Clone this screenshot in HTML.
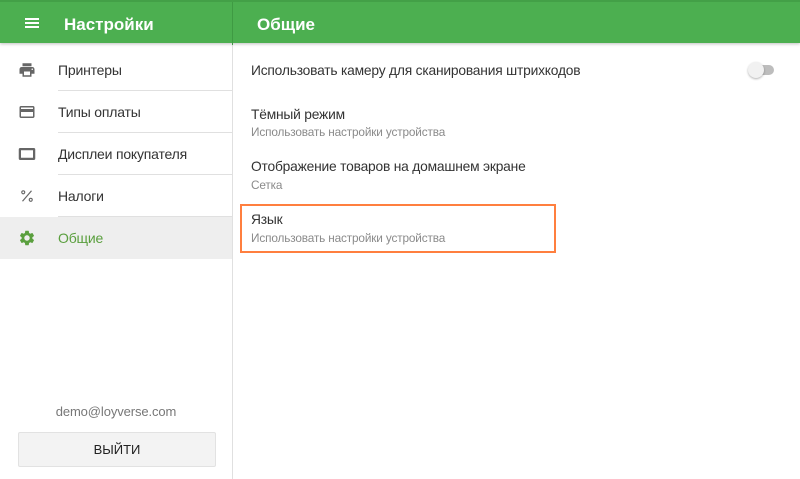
<!DOCTYPE html>
<html><head><meta charset="utf-8"><style>
*{margin:0;padding:0;box-sizing:border-box}
body{width:800px;height:479px;overflow:hidden;background:#fff;font-family:"Liberation Sans",sans-serif;position:relative}
.hdr{position:absolute;left:0;top:0;width:800px;height:43px;background:#4caf50;border-top:2px solid #43a047;box-shadow:0 1px 3px rgba(0,0,0,.25);z-index:2}
.hdr .t{position:absolute;top:13px;color:#fff;font-size:17px;font-weight:bold}
.hdr .sep{position:absolute;left:232px;top:0;width:1px;height:43px;background:#3f9a43}
.side{position:absolute;left:0;top:43px;width:233px;height:436px;border-right:1px solid #e0e0e0}
.row{position:absolute;left:0;width:232px;height:42px}
.row .l{position:absolute;left:58px;top:13px;font-size:14px;color:#333;letter-spacing:-0.2px}
.row .ln{position:absolute;left:58px;right:0;bottom:0;height:1px;background:#e0e0e0}
.row svg{position:absolute;left:18px;top:12px}
.it{position:absolute;left:251px;font-size:13.8px;color:#333;letter-spacing:-0.2px}
.sub{position:absolute;left:251px;font-size:11.8px;color:#8a8a8a;letter-spacing:-0.15px}
</style></head><body>
<div class="hdr">
<svg style="position:absolute;left:25px;top:15px" width="14" height="12" viewBox="0 0 14 12"><rect y="1" width="14" height="2" fill="#fff"/><rect y="5" width="14" height="2" fill="#fff"/><rect y="9" width="14" height="2" fill="#fff"/></svg>
<div class="t" style="left:64px">Настройки</div>
<div class="sep"></div>
<div class="t" style="left:257px">Общие</div>
</div>
<div class="side">
<div class="row" style="top:6px"><svg width="18" height="18" viewBox="0 0 24 24"><path fill="#666" d="M19 8H5c-1.66 0-3 1.340-3 3v6h4v4h12v-4h4v-6c0-1.66-1.34-3-3-3zm-3 11H8v-5h8v5zm3-7c-.55 0-1-.45-1-1s.45-1 1-1 1 .45 1 1-.45 1-1 1zm-1-9H6v4h12V3z"/></svg><div class="l">Принтеры</div><div class="ln"></div></div>
<div class="row" style="top:48px"><svg width="18" height="18" viewBox="0 0 24 24"><path fill="#666" d="M20 4H4c-1.11 0-2 .89-2 2v12c0 1.11.89 2 2 2h16c1.11 0 2-.89 2-2V6c0-1.11-.89-2-2-2zm0 14H4v-6h16v6zm0-10H4V6h16v2z"/></svg><div class="l">Типы оплаты</div><div class="ln"></div></div>
<div class="row" style="top:90px"><svg width="18" height="18" viewBox="0 0 24 24"><path fill="#666" d="M1 6a2 2 0 012-2h18a2 2 0 012 2v12a2 2 0 01-2 2H3a2 2 0 01-2-2zm3 1v10h16V7z"/></svg><div class="l">Дисплеи покупателя</div><div class="ln"></div></div>
<div class="row" style="top:132px"><svg width="18" height="18" viewBox="0 0 24 24"><circle cx="7" cy="7" r="2" fill="none" stroke="#666" stroke-width="1.5"/><circle cx="17" cy="17" r="2" fill="none" stroke="#666" stroke-width="1.5"/><path d="M18 5L6 19" stroke="#666" stroke-width="1.6"/></svg><div class="l">Налоги</div><div class="ln"></div></div>
<div class="row" style="top:174px;background:#eeeeee"><svg width="18" height="18" viewBox="0 0 24 24"><path fill="#5a9f3e" d="M19.14 12.94c.04-.3.06-.61.06-.94 0-.32-.02-.64-.07-.94l2.030-1.58a.49.49 0 00.12-.61l-1.92-3.32a.488.488 0 00-.59-.22l-2.39.96c-.5-.38-1.03-.7-1.62-.94l-.36-2.54a.484.484 0 00-.48-.41h-3.84c-.24 0-.43.17-.47.41l-.36 2.54c-.59.24-1.13.57-1.62.94l-2.39-.96c-.22-.08-.47 0-.59.22L2.74 8.87c-.12.21-.08.47.12.61l2.03 1.58c-.05.3-.09.63-.09.94s.02.64.07.94l-2.03 1.58a.49.49 0 00-.12.61l1.92 3.32c.12.22.37.29.59.22l2.39-.96c.5.38 1.03.7 1.62.94l.36 2.54c.05.24.24.41.48.41h3.84c.24 0 .44-.17.47-.41l.36-2.54c.59-.24 1.13-.56 1.62-.94l2.39.96c.22.08.47 0 .59-.22l1.92-3.32c.12-.22.07-.47-.12-.61l-2.010-1.58zM12 15.6c-1.98 0-3.6-1.62-3.6-3.6s1.62-3.6 3.6-3.6 3.6 1.62 3.6 3.6-1.62 3.6-3.6 3.6z"/></svg><div class="l" style="color:#5a9f3e">Общие</div></div>
<div style="position:absolute;left:0;width:232px;top:361px;text-align:center;font-size:13px;color:#777;letter-spacing:-0.1px">demo@loyverse.com</div>
<div style="position:absolute;left:18px;top:389px;width:198px;height:35px;background:#f3f3f3;border:1px solid #e2e2e2;border-radius:2px;text-align:center;line-height:33px;font-size:13px;color:#222">ВЫЙТИ</div>
</div>
<div class="it" style="top:63px">Использовать камеру для сканирования штрихкодов</div>
<div style="position:absolute;left:751px;top:65px;width:23px;height:10px;border-radius:5px;background:#bdbdbd"></div>
<div style="position:absolute;left:748px;top:62px;width:16px;height:16px;border-radius:50%;background:#f1f1f1;box-shadow:0 1px 2px rgba(0,0,0,.3)"></div>
<div class="it" style="top:107px">Тёмный режим</div>
<div class="sub" style="top:125px">Использовать настройки устройства</div>
<div class="it" style="top:159px">Отображение товаров на домашнем экране</div>
<div class="sub" style="top:178px">Сетка</div>
<div style="position:absolute;left:240px;top:204px;width:316px;height:49px;border:2px solid #ff7f3f"></div>
<div class="it" style="top:212px">Язык</div>
<div class="sub" style="top:231px">Использовать настройки устройства</div>
</body></html>
